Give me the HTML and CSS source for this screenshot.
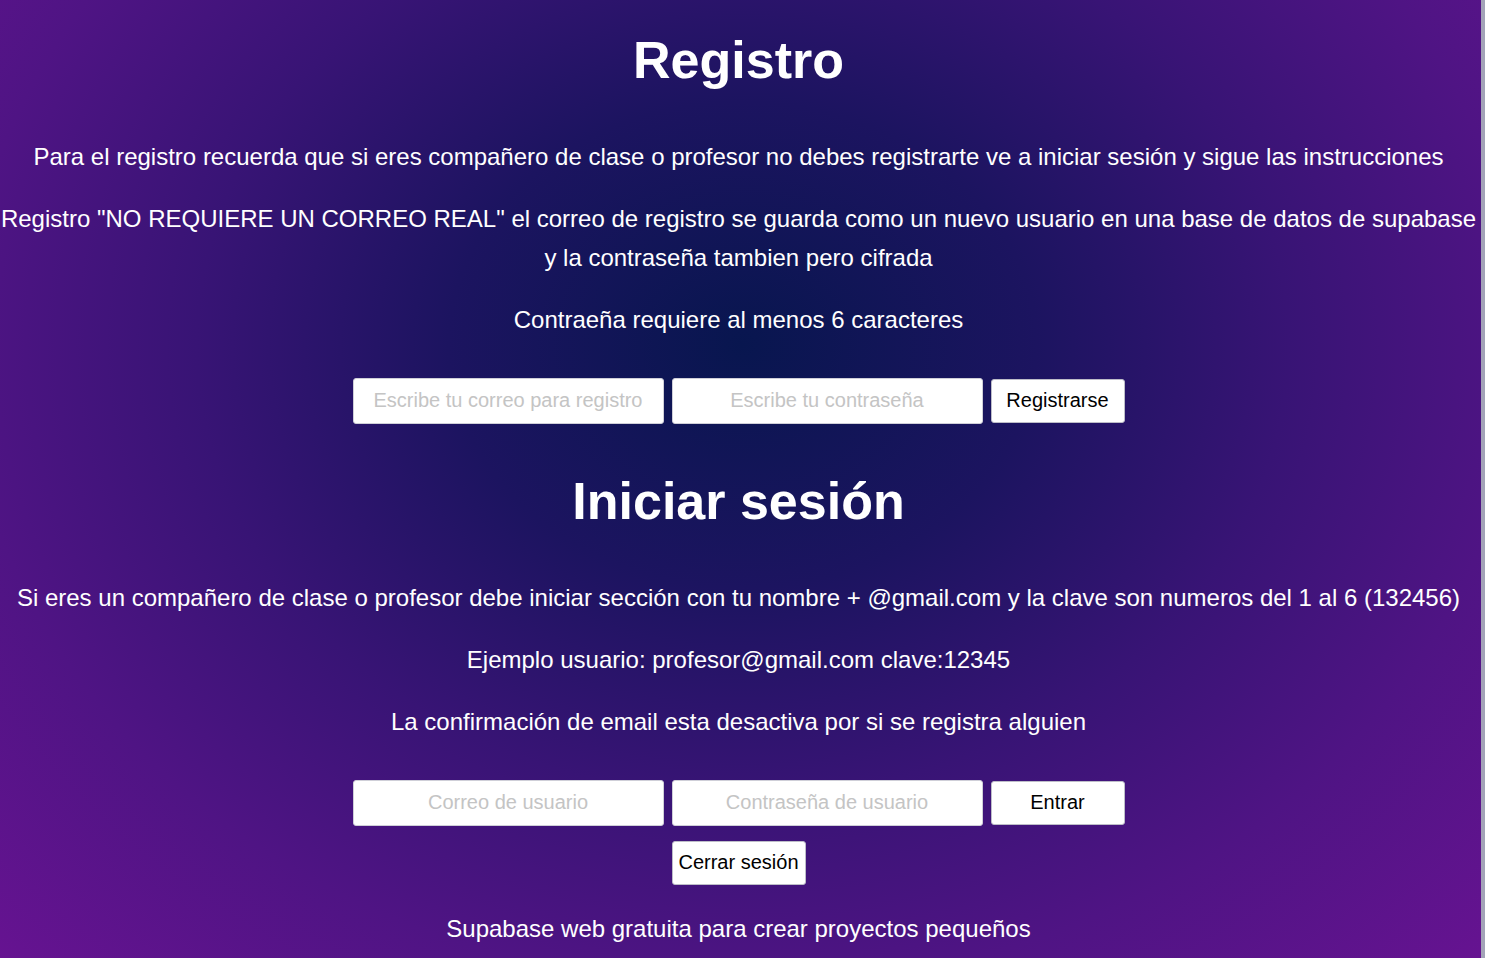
FILE: index.html
```html
<!DOCTYPE html>
<html lang="es">
<head>
<meta charset="utf-8">
<title>Registro</title>
<link rel="stylesheet" href="styles.css">
</head>
<body>
<div class="page">
  <main class="content">
    <h1 class="title title-first">Registro</h1>
    <p class="text">Para el registro recuerda que si eres compañero de clase o profesor no debes registrarte ve a iniciar sesión y sigue las instrucciones</p>
    <p class="text">Registro "NO REQUIERE UN CORREO REAL" el correo de registro se guarda como un nuevo usuario en una base de datos de supabase y la contraseña tambien pero cifrada</p>
    <p class="text">Contraeña requiere al menos 6 caracteres</p>
    <form class="row row-register">
      <input class="field" type="email" placeholder="Escribe tu correo para registro">
      <input class="field" type="password" placeholder="Escribe tu contraseña">
      <button class="btn" type="button">Registrarse</button>
    </form>
    <h1 class="title">Iniciar sesión</h1>
    <p class="text">Si eres un compañero de clase o profesor debe iniciar sección con tu nombre + @gmail.com y la clave son numeros del 1 al 6 (132456)</p>
    <p class="text">Ejemplo usuario: profesor@gmail.com clave:12345</p>
    <p class="text">La confirmación de email esta desactiva por si se registra alguien</p>
    <form class="row row-login">
      <input class="field" type="email" placeholder="Correo de usuario">
      <input class="field" type="password" placeholder="Contraseña de usuario">
      <button class="btn" type="button">Entrar</button>
    </form>
    <div class="row row-logout">
      <button class="btn" type="button">Cerrar sesión</button>
    </div>
    <p class="text text-footer">Supabase web gratuita para crear proyectos pequeños</p>
  </main>
  <div class="edge"></div>
</div>
</body>
</html>
```
FILE: styles.css
```css
html, body {
  margin: 0;
  padding: 0;
  height: 100%;
  overflow: hidden;
}

body {
  font-family: "Liberation Sans", Arial, sans-serif;
  color: #ffffff;
}

.page {
  display: flex;
  min-height: 100vh;
  background: radial-gradient(ellipse farthest-corner at 50% 36%, #08164f 0%, #1c1460 28%, #381475 52%, #4f1484 74%, #661391 100%);
}

.content {
  flex: 1;
  display: flex;
  flex-direction: column;
  align-items: center;
  text-align: center;
  padding-right: 4px;
}

.edge {
  width: 4px;
  flex: none;
  background: #a3a3b8;
}

.title {
  font-size: 52px;
  font-weight: bold;
  line-height: 60px;
  margin: 0 0 48px;
}

.title-first {
  margin-top: 30px;
}

.text {
  font-size: 24px;
  line-height: 38.4px;
  margin: 0 0 24px;
  width: 100%;
}

.row {
  display: flex;
  justify-content: center;
  align-items: center;
  gap: 8px;
  margin: 14px 0 47px;
}

.row-login {
  margin: 14px 0 15px;
}

.row-logout {
  margin: 0 0 25px;
}

.field {
  box-sizing: border-box;
  width: 311px;
  height: 46px;
  background: #ffffff;
  border: 1px solid #cfcfd8;
  border-radius: 3px;
  font-family: "Liberation Sans", Arial, sans-serif;
  font-size: 20px;
  text-align: center;
  color: #222222;
  padding: 0 10px;
}

.field::placeholder {
  color: #c4c4c4;
}

.btn {
  box-sizing: border-box;
  width: 134px;
  height: 44px;
  padding: 0;
  background: #ffffff;
  border: 1px solid #bdbdc8;
  border-radius: 3px;
  font-family: "Liberation Sans", Arial, sans-serif;
  font-size: 20px;
  color: #000000;
}

.text-footer {
  margin-bottom: 0;
}
```
